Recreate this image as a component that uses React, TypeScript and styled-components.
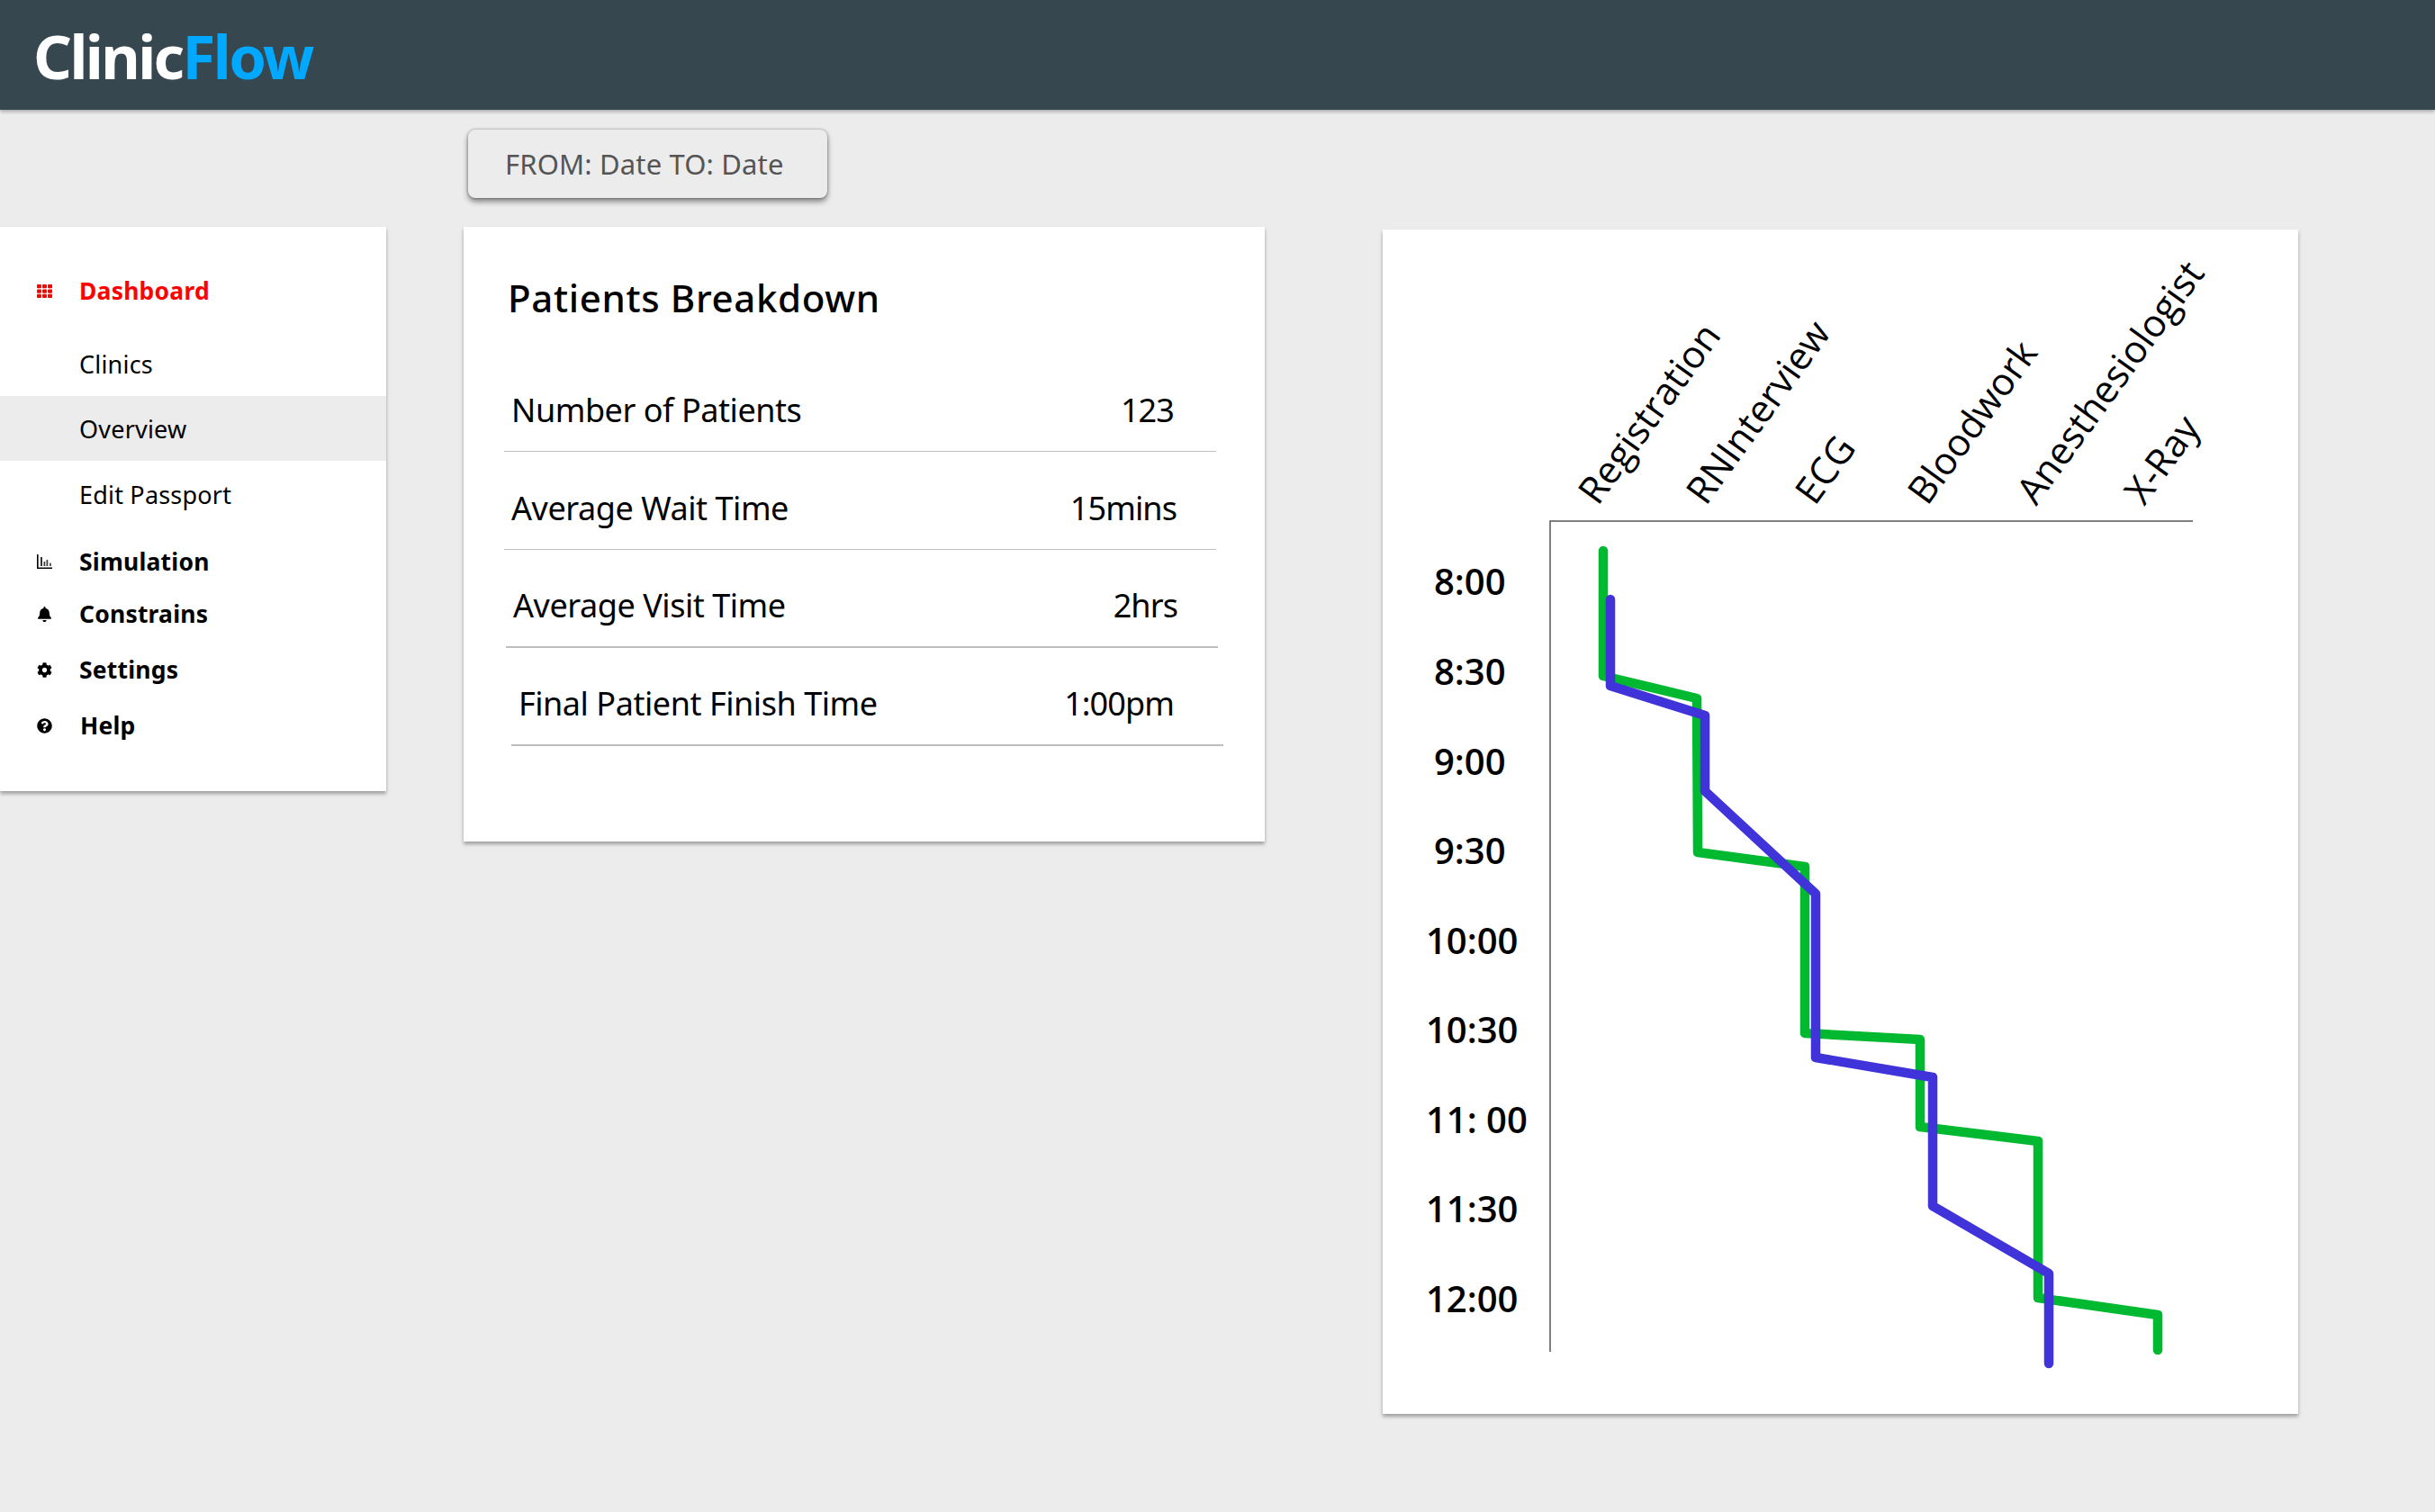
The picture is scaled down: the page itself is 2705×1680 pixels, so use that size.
import React from 'react';
import styled, { createGlobalStyle } from 'styled-components';
import { FaBell, FaCog, FaQuestionCircle, FaTh } from 'react-icons/fa';

const Global = createGlobalStyle`
  html, body { margin: 0; padding: 0; background: #ececec; }
  body { font-family: "Noto Sans", "Open Sans", sans-serif; color: #000; }
`;
const Page = styled.div`
  width: 2705px;
  height: 1680px;
  overflow: hidden;
  background: #ececec;
`;
const Header = styled.header`
  box-sizing: border-box;
  height: 122px;
  background: #37474f;
  box-shadow: 0 2px 4px rgba(0, 0, 0, 0.3);
  display: flex;
  align-items: center;
  padding: 2px 0 0 37px;
`;
const Logo = styled.div`
  font-size: 67px;
  font-weight: 700;
  letter-spacing: -2.6px;
  color: #fff;
  span { color: #00a9ff; }
`;
const Toolbar = styled.div`
  padding: 22px 0 0 520px;
`;
const DateButton = styled.button`
  display: block;
  box-sizing: border-box;
  width: 399px;
  height: 76px;
  padding: 0 0 0 41px;
  border: 0;
  border-radius: 8px;
  background: #ececec;
  color: #555;
  font: 400 31px "Noto Sans", sans-serif;
  letter-spacing: 0.15px;
  text-align: left;
  box-shadow: 0 4px 6px rgba(0, 0, 0, 0.45), 0 0 3px rgba(0, 0, 0, 0.35);
`;
const Content = styled.main`
  display: flex;
  align-items: flex-start;
  margin-top: 32px;
`;
const Card = styled.section`
  background: #fff;
  box-shadow: 0 3px 4px rgba(0, 0, 0, 0.33);
`;
const Sidebar = styled(Card)`
  box-sizing: border-box;
  width: 429px;
  height: 627px;
  padding-top: 25px;
`;
const NavItem = styled.div<{ $h: number; $bold?: boolean; $active?: boolean; $red?: boolean }>`
  display: flex;
  align-items: center;
  height: ${p => p.$h}px;
  padding-left: 41px;
  font-size: ${p => (p.$bold ? 26.5 : 27)}px;
  font-weight: ${p => (p.$bold ? 700 : 400)};
  letter-spacing: 0.2px;
  color: ${p => (p.$red ? '#ff0000' : '#000')};
  background: ${p => (p.$active ? '#ececec' : 'transparent')};
`;
const NavIcon = styled.span<{ $gap?: number }>`
  display: flex;
  align-items: center;
  justify-content: center;
  width: 17px;
  height: 17px;
  margin-right: ${p => p.$gap ?? 30}px;
  font-size: 17px;
`;
const Breakdown = styled(Card)`
  box-sizing: border-box;
  width: 890px;
  height: 683px;
  margin-left: 86px;
  padding: 50px 0 0 45px;
`;
const Title = styled.h2`
  margin: 0 0 33px 4px;
  font-size: 42px;
  line-height: 58px;
  font-weight: 500;
  letter-spacing: 0.65px;
`;
const Row = styled.div<{ $shift: number; $end: number; $rule: number }>`
  box-sizing: border-box;
  display: flex;
  justify-content: space-between;
  align-items: center;
  width: 791px;
  height: 109px;
  margin-left: ${p => p.$shift}px;
  padding: 16px ${p => p.$end}px 0 8px;
  border-bottom: ${p => p.$rule}px solid #bdbdbd;
  font-size: 36px;
  letter-spacing: -0.45px;
`;
const RowValue = styled.span`
  letter-spacing: -0.9px;
`;
const ChartCard = styled(Card)`
  width: 1017px;
  height: 1316px;
  margin: 3px 0 0 131px;
`;
const ChartSvg = styled.svg`
  display: block;
`;
const AxisLabel = styled.text`
  font: 500 42px "Open Sans", sans-serif;
  fill: #000;
`;
const TimeLabel = styled.text`
  font: 600 40px "Open Sans", sans-serif;
  fill: #000;
`;

const BarsIcon = () => (
  <svg width="17" height="16" viewBox="0 0 17 16" fill="#000">
    <path d="M0 0h1.6v14.4H17V16H0z" />
    <rect x="4" y="3" width="2" height="10" fill="#333" />
    <rect x="7.5" y="8" width="1.8" height="5" fill="#444" />
    <rect x="10.5" y="6" width="1.8" height="7" fill="#444" />
    <rect x="14" y="9.5" width="1.8" height="3.5" fill="#555" />
  </svg>
);

const rows = [
  { label: 'Number of Patients', value: '123', shift: 0, end: 47, rule: 1 },
  { label: 'Average Wait Time', value: '15mins', shift: 0, end: 44, rule: 1 },
  { label: 'Average Visit Time', value: '2hrs', shift: 2, end: 45, rule: 2 },
  { label: 'Final Patient Finish Time', value: '1:00pm', shift: 8, end: 55, rule: 2 },
];
// Chart coordinates are relative to the card's top-left (page x-1536, y-255).
const off = (pts: number[][]) => pts.map(([x, y]) => `${x - 1536},${y - 255}`).join(' ');
const green = off([[1781, 612], [1781, 751], [1885, 776], [1886, 947], [2005, 963], [2005, 1148], [2133, 1155], [2133, 1252], [2264, 1268], [2264, 1442], [2397, 1461], [2397, 1500]]);
const blue = off([[1789, 666], [1789, 762], [1894, 795], [1894, 879], [2017, 993], [2017, 1175], [2147, 1197], [2147, 1340], [2276, 1415], [2276, 1515]]);
const heads: [string, number, number][] = [
  ['Registration', 1775, 563], ['RNInterview', 1895, 563], ['ECG', 2016, 563],
  ['Bloodwork', 2141, 563], ['Anesthesiologist', 2262, 563], ['X-Ray', 2382, 563],
];
const times: [string, number, number][] = [
  ['8:00', 1593, 661], ['8:30', 1593, 761], ['9:00', 1593, 861], ['9:30', 1593, 960], ['10:00', 1584, 1060],
  ['10:30', 1584, 1159], ['11: 00', 1584, 1259], ['11:30', 1584, 1358], ['12:00', 1584, 1458],
];

export default function App() {
  return (
    <Page>
      <Global />
      <Header><Logo>Clinic<span>Flow</span></Logo></Header>
      <Toolbar><DateButton>FROM: Date TO: Date</DateButton></Toolbar>
      <Content>
        <Sidebar>
          <NavItem $h={92} $bold $red><NavIcon><FaTh /></NavIcon>Dashboard</NavItem>
          <NavItem $h={71}><NavIcon />Clinics</NavItem>
          <NavItem $h={72} $active><NavIcon />Overview</NavItem>
          <NavItem $h={75}><NavIcon />Edit Passport</NavItem>
          <NavItem $h={73} $bold><NavIcon><BarsIcon /></NavIcon>Simulation</NavItem>
          <NavItem $h={44} $bold><NavIcon><FaBell /></NavIcon>Constrains</NavItem>
          <NavItem $h={80} $bold><NavIcon><FaCog /></NavIcon>Settings</NavItem>
          <NavItem $h={44} $bold><NavIcon $gap={31}><FaQuestionCircle /></NavIcon>Help</NavItem>
        </Sidebar>
        <Breakdown>
          <Title>Patients Breakdown</Title>
          {rows.map(r => (
            <Row key={r.label} $shift={r.shift} $end={r.end} $rule={r.rule}><span>{r.label}</span><RowValue>{r.value}</RowValue></Row>
          ))}
        </Breakdown>
        <ChartCard>
          <ChartSvg width="1017" height="1316" viewBox="0 0 1017 1316">
            <path d={`M${1722 - 1536} ${1502 - 255}V${579 - 255}H${2436 - 1536}`} fill="none" stroke="#555" strokeWidth="1.5" />
            {heads.map(([t, x, y]) => (
              <AxisLabel key={t} transform={`translate(${x - 1536} ${y - 255}) rotate(-54)`}>{t}</AxisLabel>
            ))}
            {times.map(([t, x, y]) => (
              <TimeLabel key={t} x={x - 1536} y={y - 255}>{t}</TimeLabel>
            ))}
            <polyline points={green} fill="none" stroke="#00b931" strokeWidth="10.5" strokeLinejoin="round" strokeLinecap="round" />
            <polyline points={blue} fill="none" stroke="#3f33d9" strokeWidth="10.5" strokeLinejoin="round" strokeLinecap="round" />
          </ChartSvg>
        </ChartCard>
      </Content>
    </Page>
  );
}
